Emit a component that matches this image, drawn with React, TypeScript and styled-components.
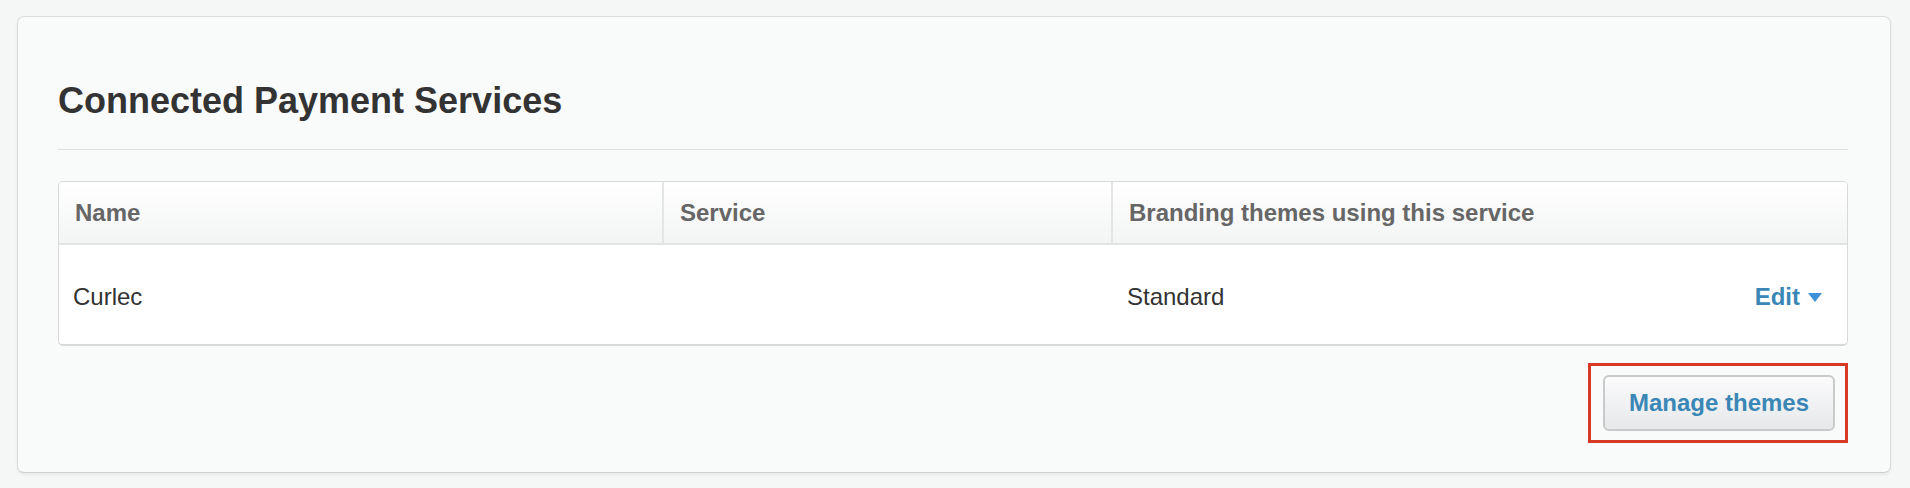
import styled, { createGlobalStyle } from "styled-components";

const GlobalStyle = createGlobalStyle`
	html,
	body {
		margin: 0;
		padding: 0;
		background: #f5f6f6;
		font-family: "Liberation Sans", Arial, Helvetica, sans-serif;
		color: #333;
	}
`;

const Page = styled.div`
	padding: 16px 19px 16px 17px;
`;

const Card = styled.section`
	background: #f9fafa;
	border: 1px solid #dcdcdc;
	border-bottom-color: #cfcfcf;
	border-radius: 7px;
	box-shadow: 0 2px 3px rgba(0, 0, 0, 0.06);
	padding: 64px 42px 29px 40px;
`;

const Title = styled.h2`
	margin: 0;
	font-size: 36px;
	line-height: 40px;
	font-weight: 700;
	color: #333;
	padding-bottom: 28px;
	border-bottom: 1px solid #dfe0e0;
`;

const Table = styled.div`
	margin-top: 31px;
	background: #fff;
	border: 1px solid #d8d9d9;
	border-bottom-width: 2px;
	border-radius: 5px;
	overflow: hidden;
`;

const Row = styled.div<{ $head?: boolean }>`
	display: grid;
	grid-template-columns: 603px 449px 1fr;
	height: ${(p) => (p.$head ? "61px" : "99px")};
	background: ${(p) =>
		p.$head ? "linear-gradient(#ffffff, #f3f4f4)" : "#ffffff"};
	border-bottom: ${(p) => (p.$head ? "2px solid #e2e3e3" : "none")};
`;

const HeadCell = styled.div`
	display: flex;
	align-items: center;
	padding: 0 16px;
	font-size: 24px;
	font-weight: 700;
	color: #666;
	& + & {
		border-left: 2px solid #e4e5e5;
	}
`;

const Cell = styled.div`
	display: flex;
	align-items: center;
	padding: 5px 25px 0 14px;
	font-size: 24px;
	color: #333;
	& + & {
		padding-left: 16px;
	}
`;

const CellText = styled.span`
	flex: 1;
`;

const EditLink = styled.a`
	display: flex;
	align-items: center;
	gap: 8px;
	font-size: 24px;
	font-weight: 700;
	color: #3a87b6;
	text-decoration: none;
	cursor: pointer;
`;

const Caret = styled.span`
	width: 0;
	height: 0;
	border-left: 7px solid transparent;
	border-right: 7px solid transparent;
	border-top: 9px solid #3d91d8;
	margin-top: 1px;
`;

const Footer = styled.div`
	display: flex;
	justify-content: flex-end;
	margin-top: 17px;
`;

const Highlight = styled.div`
	border: 3px solid #d63a22;
	padding: 9px 10px 9px 12px;
`;

const Button = styled.button`
	width: 232px;
	height: 56px;
	border: 2px solid #c9cacb;
	border-radius: 6px;
	background: linear-gradient(#fbfbfc, #e6e8ea);
	font-family: inherit;
	font-size: 24px;
	font-weight: 700;
	color: #3a87b6;
	cursor: pointer;
`;

export default function App() {
	return (
		<>
			<GlobalStyle />
			<Page>
				<Card>
					<Title>Connected Payment Services</Title>
					<Table>
						<Row $head>
							<HeadCell>Name</HeadCell>
							<HeadCell>Service</HeadCell>
							<HeadCell>Branding themes using this service</HeadCell>
						</Row>
						<Row>
							<Cell>
								<CellText>Curlec</CellText>
							</Cell>
							<Cell>
								<CellText></CellText>
							</Cell>
							<Cell>
								<CellText>Standard</CellText>
								<EditLink>
									Edit
									<Caret />
								</EditLink>
							</Cell>
						</Row>
					</Table>
					<Footer>
						<Highlight>
							<Button>Manage themes</Button>
						</Highlight>
					</Footer>
				</Card>
			</Page>
		</>
	);
}
